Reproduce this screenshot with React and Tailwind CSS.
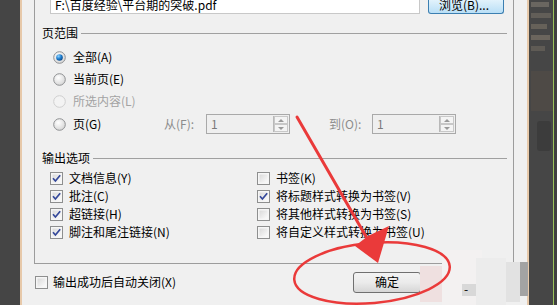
import React from 'react'

const font = { fontFamily: '"Noto Sans CJK SC", "Liberation Sans", sans-serif' }

const Radio = ({ checked, disabled }) => (
    <svg width="13" height="13" viewBox="0 0 13 13" className="shrink-0">
        <defs>
            <radialGradient id="rbg" cx="0.4" cy="0.35" r="0.7">
                <stop offset="0" stopColor="#ffffff" />
                <stop offset="1" stopColor="#d4d4d4" />
            </radialGradient>
            <radialGradient id="rdot" cx="0.35" cy="0.3" r="0.8">
                <stop offset="0" stopColor="#8fd3ff" />
                <stop offset="0.5" stopColor="#1f7fd0" />
                <stop offset="1" stopColor="#0b3f7a" />
            </radialGradient>
        </defs>
        <circle cx="6.5" cy="6.5" r="5.8" fill={disabled ? '#f3f3f3' : 'url(#rbg)'} stroke={disabled ? '#cfcfcf' : '#8f9193'} strokeWidth="1" />
        {checked && <circle cx="6.5" cy="6.5" r="3.3" fill="url(#rdot)" />}
    </svg>
)

const Check = ({ checked }) => (
    <svg width="13" height="13" viewBox="0 0 13 13" className="shrink-0">
        <defs>
            <linearGradient id="cbg" x1="0" y1="0" x2="1" y2="1">
                <stop offset="0" stopColor="#dadada" />
                <stop offset="1" stopColor="#fbfbfb" />
            </linearGradient>
        </defs>
        <rect x="0.5" y="0.5" width="12" height="12" fill="#f6f6f6" stroke="#8e8f8f" />
        <rect x="2.5" y="2.5" width="8" height="8" fill="url(#cbg)" />
        {checked && <path d="M3 6.3 L5.4 9 L10.2 3.2" fill="none" stroke="#34489a" strokeWidth="1.7" />}
    </svg>
)

const Spin = () => (
    <div className="flex w-[84px] h-[20px] border border-[#a9a9a9] bg-[#efefef] shrink-0">
        <div className="flex-1 pl-[4px] text-[12px] leading-[18px] text-[#7a7a7a]">1</div>
        <div className="w-[15px] border-l border-[#b8b8b8] flex flex-col my-[1px] mr-[1px]">
            <div className="flex-1 border border-[#c8c8c8] bg-[#f4f4f4] flex items-center justify-center">
                <div className="w-0 h-0 border-l-[3px] border-r-[3px] border-b-[3px] border-l-transparent border-r-transparent border-b-[#9a9a9a]" />
            </div>
            <div className="flex-1 border border-[#c8c8c8] bg-[#f4f4f4] flex items-center justify-center">
                <div className="w-0 h-0 border-l-[3px] border-r-[3px] border-t-[3px] border-l-transparent border-r-transparent border-t-[#9a9a9a]" />
            </div>
        </div>
    </div>
)

const Header = ({ children }) => (
    <div className="flex items-center h-[14px] ml-[7px] mr-[6px]">
        <span className="text-[12px] leading-[14px] text-black">{children}</span>
        <div className="flex-1 ml-[3px] h-px bg-[#a0a0a0]" />
    </div>
)

const RadioRow = ({ label, checked, disabled }) => (
    <div className="flex items-center h-[22px] pl-[18px] gap-[7px]">
        <Radio checked={checked} disabled={disabled} />
        <span className={`text-[12px] ${disabled ? 'text-[#a3a3a3]' : 'text-black'}`}>{label}</span>
    </div>
)

const CheckRow = ({ label, checked }) => (
    <div className="flex items-center h-[18px] gap-[6px]">
        <Check checked={checked} />
        <span className="text-[12px] text-black whitespace-nowrap">{label}</span>
    </div>
)

const App = () => {
    return (
        <div className="relative w-[557px] h-[305px] flex overflow-hidden bg-[#f0f0f0]" style={font}>
            {/* left edge of the desktop */}
            <div className="w-[22px] shrink-0 bg-[#454545] border-r-2 border-[#e7c9aa]" />

            {/* dialog */}
            <div className="w-[505px] shrink-0 flex flex-col bg-[#f0f0f0]">
                <div className="ml-[12px] w-[480px] h-[264px] border-l border-r border-b border-[#9c9c9c] flex flex-col">
                    <div className="flex h-[14px] items-end">
                        <div className="ml-[15px] w-[370px] h-[14px] border-l border-r border-b border-[#c8c8c8] bg-white pl-[4px] text-[12px] leading-[10px] text-black overflow-hidden whitespace-nowrap">
                            F:\百度经验\平台期的突破.pdf
                        </div>
                        <div className="ml-[8px] w-[76px] h-[15px] rounded-b-[3px] border border-t-0 border-[#3c7fb1] bg-gradient-to-b from-[#e5f4fc] to-[#b9dff6] text-[12px] leading-[11px] pl-[10px] text-black whitespace-nowrap overflow-hidden">
                            浏览(B)...
                        </div>
                    </div>

                    <div className="mt-[12px]">
                        <Header>页范围</Header>
                    </div>
                    <div className="mt-[6px]">
                        <RadioRow label="全部(A)" checked />
                        <RadioRow label="当前页(E)" />
                        <RadioRow label="所选内容(L)" disabled />
                    </div>
                    <div className="flex items-center h-[22px] mt-[1px] pl-[18px]">
                        <Radio />
                        <span className="ml-[7px] w-[91px] text-[12px] text-black">页(G)</span>
                        <span className="w-[42px] text-[12px] text-[#8c8c8c]">从(F):</span>
                        <Spin />
                        <span className="ml-[39px] w-[43px] text-[12px] text-[#8c8c8c]">到(O):</span>
                        <Spin />
                    </div>

                    <div className="mt-[16px]">
                        <Header>输出选项</Header>
                    </div>
                    <div className="mt-[4px] flex pl-[15px]">
                        <div className="w-[207px] flex flex-col">
                            <CheckRow label="文档信息(Y)" checked />
                            <CheckRow label="批注(C)" checked />
                            <CheckRow label="超链接(H)" checked />
                            <CheckRow label="脚注和尾注链接(N)" checked />
                        </div>
                        <div className="flex flex-col">
                            <CheckRow label="书签(K)" />
                            <CheckRow label="将标题样式转换为书签(V)" checked />
                            <CheckRow label="将其他样式转换为书签(S)" />
                            <CheckRow label="将自定义样式转换为书签(U)" />
                        </div>
                    </div>
                </div>

                <div className="flex items-center h-[36px]">
                    <div className="ml-[13px] w-[318px] flex items-center gap-[5px]">
                        <Check />
                        <span className="text-[12px] text-black">输出成功后自动关闭(X)</span>
                    </div>
                    <div className="w-[68px] h-[21px] rounded-[3px] border border-[#707070] bg-gradient-to-b from-[#f3f3f3] via-[#ebebeb] to-[#d6d6d6] flex items-center justify-center text-[12px] text-black">
                        确定
                    </div>
                </div>
            </div>

            {/* right edge of the desktop */}
            <div className="flex-1 border-l-2 border-[#e7c9aa] bg-[#464646] flex">
                <div className="flex-1 flex flex-col gap-[6px] pt-[2px] pl-[2px]">
                    <div className="h-[5px] w-[18px] bg-[#6a6660]" />
                    <div className="h-[5px] w-[20px] bg-[#625e58]" />
                    <div className="h-[5px] w-[16px] bg-[#666159]" />
                    <div className="h-[5px] w-[19px] bg-[#6b655d]" />
                    <div className="h-[5px] w-[14px] bg-[#5f5b55]" />
                    <div className="mt-[14px] h-[40px] w-[22px] bg-[#4e4a46]" />
                    <div className="mt-[4px] h-[30px] w-[14px] ml-[6px] rounded-[3px] bg-[#3c3c3c]" />
                </div>
                <div className="w-px bg-[#9cc45a]" />
                <div className="w-[3px] bg-[#3f3f3f]" />
            </div>

            {/* mosaic redaction over the second button */}
            <div className="absolute left-[420px] top-[250px] w-[108px] h-[55px] pointer-events-none">
                <div className="absolute left-[0px] top-[16px] w-[22px] h-[36px] bg-[#efe0e0]" />
                <div className="absolute left-[22px] top-[0px] w-[40px] h-[55px] bg-[#f3f1f1]" />
                <div className="absolute left-[56px] top-[8px] w-[30px] h-[47px] bg-[#ececec]" />
                <div className="absolute left-[86px] top-[12px] w-[14px] h-[40px] bg-[#e2e2e2]" />
                <div className="absolute left-[100px] top-[12px] w-[8px] h-[34px] bg-[#a3a3a3]" />
                <div className="absolute left-[42px] top-[34px] w-[14px] h-[12px] bg-[#d8d8d8]" />
                <div className="absolute left-[44px] top-[33px] text-[12px] leading-[12px] text-black">-</div>
            </div>

            {/* red annotation */}
            <svg className="absolute inset-0 pointer-events-none" width="557" height="305" viewBox="0 0 557 305">
                <ellipse cx="372" cy="273" rx="78" ry="30" transform="rotate(-5 372 273)" fill="none" stroke="#ea3a3a" strokeWidth="2.5" />
                <line x1="297" y1="117" x2="368" y2="240" stroke="#ea3a3a" strokeWidth="3" strokeLinecap="round" />
                <polygon points="378,263 355,246 368,236 389,226" fill="#ea3a3a" />
            </svg>
        </div>
    );
};

export default App;
